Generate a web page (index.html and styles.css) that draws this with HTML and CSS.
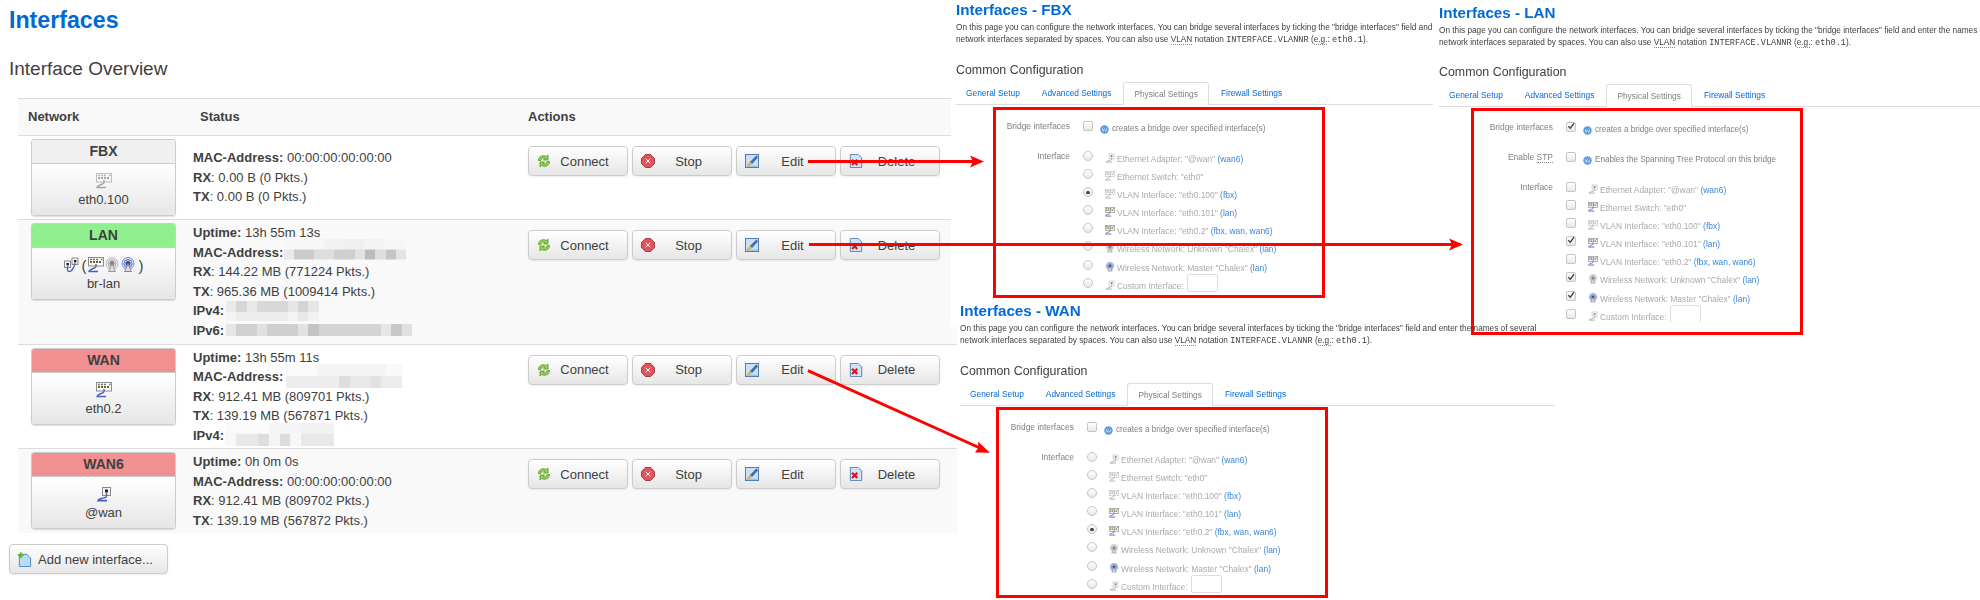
FILE: index.html
```html
<!DOCTYPE html>
<html lang="en">
<head>
<meta charset="utf-8">
<title>Interfaces</title>
<link rel="stylesheet" href="styles.css">
</head>
<body>
<svg class="defs" width="0" height="0" aria-hidden="true">
  <symbol id="i-eth" viewBox="0 0 16 16">
    <rect x="6.5" y="1.5" width="8" height="8" fill="#f6f6f6" stroke="#8a8a8a"/>
    <rect x="9" y="3.5" width="3" height="3" fill="#222"/>
    <path d="M10.5 7v3c0 2-2.500 1.500-5 2.500S2 13 2 14.500h9" fill="none" stroke="#4a62b8" stroke-width="1.400"/>
    <path d="M1 15.500h10" stroke="#9aa6d8"/>
  </symbol>
  <symbol id="i-bridge" viewBox="0 0 16 16">
    <rect x="1.500" y="4" width="6" height="6.500" fill="#f6f6f6" stroke="#8a8a8a"/>
    <rect x="9" y="1" width="6" height="6.500" fill="#f6f6f6" stroke="#8a8a8a"/>
    <rect x="3.500" y="6" width="2.400" height="2.400" fill="#222"/>
    <rect x="11" y="3" width="2.400" height="2.400" fill="#222"/>
    <path d="M4.500 9v4c0 2 3 2 4.500 0S12 8 12 6" fill="none" stroke="#4a62b8" stroke-width="1.300"/>
  </symbol>
  <symbol id="i-switch" viewBox="0 0 16 16">
    <rect x=".5" y=".5" width="15" height="8.500" fill="#f8f8f8" stroke="#8c8c8c"/>
    <path d="M2 2.500h2M5 2.500h2M8 2.500h2M13 2.500h1.500" stroke="#777" stroke-width="1.400"/>
    <path d="M2 5h2M5 5h2M8 5h2M11 5h2" stroke="#6d6a1c" stroke-width="2"/>
    <path d="M8 7v2.500c0 1.500-2 1.500-4 2.500S1 13 1 14.500h9" fill="none" stroke="#4a62b8" stroke-width="1.400"/>
  </symbol>
  <symbol id="i-wifi" viewBox="0 0 16 16">
    <circle cx="8" cy="6.500" r="6" fill="#eee" stroke="#bbb"/>
    <circle cx="8" cy="6.500" r="4" fill="#e2e2e2" stroke="#aaa"/>
    <circle cx="8" cy="6.500" r="2" fill="#888" stroke="#777"/>
    <path d="M8 7l-3.500 7.500h7z" fill="#ddd" stroke="#999"/>
  </symbol>
  <symbol id="i-wifiblue" viewBox="0 0 16 16">
    <circle cx="8" cy="6.500" r="6" fill="#dfe6fa" stroke="#7189dc"/>
    <circle cx="8" cy="6.500" r="4" fill="#c6d2f4" stroke="#5470cf"/>
    <circle cx="8" cy="6.500" r="2" fill="#556" stroke="#445"/>
    <path d="M8 7l-3.500 7.500h7z" fill="#ddd" stroke="#889"/>
  </symbol>
  <symbol id="i-connect" viewBox="2 1 12 14">
    <path d="M2.500 7.500C2.500 3.500 7 1.500 10.500 3.500L12 2v5H7.500l1.500-1.500C7 4.500 5 5.500 4.800 7.500z" fill="#9ad050" stroke="#4e9a1e" stroke-width=".8"/>
    <path d="M13.500 8.500c0 4-4.500 6-8 4L4 14V9h4.500L7 10.500c2 1 4 0 4.200-2z" fill="#9ad050" stroke="#4e9a1e" stroke-width=".8"/>
  </symbol>
  <symbol id="i-stop" viewBox="0 0 16 16">
    <path d="M5 .6h6L15.400 5v6L11 15.400H5L.6 11V5z" fill="#e0555c" stroke="#9c2f33"/>
    <path d="M5.500 5.500l5 5M10.500 5.500l-5 5" stroke="#fff" stroke-width="1.100"/>
  </symbol>
  <symbol id="i-edit" viewBox="0 0 16 16">
    <rect x=".5" y=".5" width="15" height="15" fill="#c9e0f7" stroke="#3d6fa8"/>
    <path d="M13 2L6 9l2 2 6.500-7z" fill="#3f6fb4" stroke="#2b4f86" stroke-width=".5"/>
    <path d="M6 9l-3.500 4.500L8 11z" fill="#f2c12e" stroke="#a8821a" stroke-width=".5"/>
    <path d="M2 14h12" stroke="#8fa9c8"/>
  </symbol>
  <symbol id="i-delete" viewBox="0 0 16 16">
    <path d="M1.500 .5h9l4 4v11h-13z" fill="#cfe2f7" stroke="#4a79b0"/>
    <path d="M3.500 6.500l6 6M9.500 6.500l-6 6" stroke="#d81414" stroke-width="2.400"/>
  </symbol>
  <symbol id="i-add" viewBox="0 0 16 16">
    <path d="M2.500 2.500h8l4 4v9h-12z" fill="#bcdcf6" stroke="#4a89c0"/>
    <path d="M4 .5v6M1 3.500h6" stroke="#5cb82e" stroke-width="2.200"/>
  </symbol>
  <symbol id="i-help" viewBox="0 0 16 16">
    <circle cx="8" cy="8" r="7.500" fill="#5a9ae0"/>
    <circle cx="8" cy="8" r="4.500" fill="#a9cdf2"/>
    <path d="M6 6.500c0-2.500 4-2.500 4 0 0 1.500-2 1.500-2 3M8 11v1.500" fill="none" stroke="#1d5fae" stroke-width="1.300"/>
  </symbol>
  <symbol id="i-check" viewBox="0 0 16 16">
    <path d="M2.500 8.500l4 4L14 2.500" fill="none" stroke="#444" stroke-width="2.600"/>
  </symbol>
</svg>

<main class="overview">
  <h1 class="page-title">Interfaces</h1>
  <h2 class="section-title">Interface Overview</h2>
  <table class="iface-table">
    <colgroup><col class="col-net"><col class="col-status"><col class="col-actions"></colgroup>
    <thead>
      <tr><th>Network</th><th>Status</th><th>Actions</th></tr>
    </thead>
    <tbody>
      <tr>
        <td class="td-net">
          <div class="card">
            <div class="card-head">FBX</div>
            <div class="card-body">
              <div class="card-icons"><svg class="ic16 dim"><use href="#i-switch"/></svg></div>
              <div>eth0.100</div>
            </div>
          </div>
        </td>
        <td class="td-status">
          <div><b>MAC-Address:</b> 00:00:00:00:00:00</div>
          <div><b>RX</b>: 0.00 B (0 Pkts.)</div>
          <div><b>TX</b>: 0.00 B (0 Pkts.)</div>
        </td>
        <td class="td-actions">
          <div class="actions">
            <button class="btn"><svg class="ic14"><use href="#i-connect"/></svg><span class="btn-label">Connect</span></button>
            <button class="btn"><svg class="ic14"><use href="#i-stop"/></svg><span class="btn-label">Stop</span></button>
            <button class="btn"><svg class="ic14"><use href="#i-edit"/></svg><span class="btn-label">Edit</span></button>
            <button class="btn"><svg class="ic14"><use href="#i-delete"/></svg><span class="btn-label">Delete</span></button>
          </div>
        </td>
      </tr>
      <tr class="alt">
        <td class="td-net">
          <div class="card">
            <div class="card-head head-green">LAN</div>
            <div class="card-body">
              <div class="card-icons"><svg class="ic16"><use href="#i-bridge"/></svg><span class="paren">(</span><svg class="ic16"><use href="#i-switch"/></svg><svg class="ic16"><use href="#i-wifi"/></svg><svg class="ic16"><use href="#i-wifiblue"/></svg><span class="paren">)</span></div>
              <div>br-lan</div>
            </div>
          </div>
        </td>
        <td class="td-status">
          <div><b>Uptime:</b> 13h 55m 13s</div>
          <div><b>MAC-Address:</b><span class="redact r-lan-mac"></span></div>
          <div><b>RX</b>: 144.22 MB (771224 Pkts.)</div>
          <div><b>TX</b>: 965.36 MB (1009414 Pkts.)</div>
          <div><b>IPv4:</b><span class="redact r-lan-ip4"></span></div>
          <div><b>IPv6:</b><span class="redact r-lan-ip6"></span></div>
        </td>
        <td class="td-actions">
          <div class="actions">
            <button class="btn"><svg class="ic14"><use href="#i-connect"/></svg><span class="btn-label">Connect</span></button>
            <button class="btn"><svg class="ic14"><use href="#i-stop"/></svg><span class="btn-label">Stop</span></button>
            <button class="btn"><svg class="ic14"><use href="#i-edit"/></svg><span class="btn-label">Edit</span></button>
            <button class="btn"><svg class="ic14"><use href="#i-delete"/></svg><span class="btn-label">Delete</span></button>
          </div>
        </td>
      </tr>
      <tr>
        <td class="td-net">
          <div class="card">
            <div class="card-head head-red">WAN</div>
            <div class="card-body">
              <div class="card-icons"><svg class="ic16"><use href="#i-switch"/></svg></div>
              <div>eth0.2</div>
            </div>
          </div>
        </td>
        <td class="td-status">
          <div><b>Uptime:</b> 13h 55m 11s</div>
          <div><b>MAC-Address:</b><span class="redact r-wan-mac"></span></div>
          <div><b>RX</b>: 912.41 MB (809701 Pkts.)</div>
          <div><b>TX</b>: 139.19 MB (567871 Pkts.)</div>
          <div><b>IPv4:</b><span class="redact r-wan-ip4"></span></div>
        </td>
        <td class="td-actions">
          <div class="actions">
            <button class="btn"><svg class="ic14"><use href="#i-connect"/></svg><span class="btn-label">Connect</span></button>
            <button class="btn"><svg class="ic14"><use href="#i-stop"/></svg><span class="btn-label">Stop</span></button>
            <button class="btn"><svg class="ic14"><use href="#i-edit"/></svg><span class="btn-label">Edit</span></button>
            <button class="btn"><svg class="ic14"><use href="#i-delete"/></svg><span class="btn-label">Delete</span></button>
          </div>
        </td>
      </tr>
      <tr class="alt">
        <td class="td-net">
          <div class="card">
            <div class="card-head head-red">WAN6</div>
            <div class="card-body">
              <div class="card-icons"><svg class="ic16"><use href="#i-eth"/></svg></div>
              <div>@wan</div>
            </div>
          </div>
        </td>
        <td class="td-status">
          <div><b>Uptime:</b> 0h 0m 0s</div>
          <div><b>MAC-Address:</b> 00:00:00:00:00:00</div>
          <div><b>RX</b>: 912.41 MB (809702 Pkts.)</div>
          <div><b>TX</b>: 139.19 MB (567872 Pkts.)</div>
        </td>
        <td class="td-actions">
          <div class="actions">
            <button class="btn"><svg class="ic14"><use href="#i-connect"/></svg><span class="btn-label">Connect</span></button>
            <button class="btn"><svg class="ic14"><use href="#i-stop"/></svg><span class="btn-label">Stop</span></button>
            <button class="btn"><svg class="ic14"><use href="#i-edit"/></svg><span class="btn-label">Edit</span></button>
            <button class="btn"><svg class="ic14"><use href="#i-delete"/></svg><span class="btn-label">Delete</span></button>
          </div>
        </td>
      </tr>
    </tbody>
  </table>
  <button class="btn btn-add"><svg class="ic15"><use href="#i-add"/></svg><span>Add new interface...</span></button>
</main>

<section class="win win-fbx">
  <div class="win-inner">
    <h2 class="win-title">Interfaces - FBX</h2>
    <p class="win-desc">On this page you can configure the network interfaces. You can bridge several interfaces by ticking the "bridge interfaces" field and enter the names of several<br>network interfaces separated by spaces. You can also use <abbr>VLAN</abbr> notation <code>INTERFACE.VLANNR</code> (<abbr>e.g.</abbr>: <code>eth0.1</code>).</p>
    <h3 class="win-sub">Common Configuration</h3>
    <ul class="tabs">
      <li class="tab">General Setup</li><li class="tab">Advanced Settings</li><li class="tab tab-on">Physical Settings</li><li class="tab">Firewall Settings</li>
    </ul>
    <div class="frow frow-single">
      <div class="flabel">Bridge interfaces</div>
      <span class="box"></span><svg class="help"><use href="#i-help"/></svg><span class="ftext">creates a bridge over specified interface(s)</span>
    </div>
    <div class="frow">
      <div class="flabel">Interface</div>
      <ul class="opts">
        <li class="opt"><span class="box round"></span><svg class="oic dim"><use href="#i-eth"/></svg><span class="ftext">Ethernet Adapter: "@wan" <a>(wan6)</a></span></li>
        <li class="opt"><span class="box round"></span><svg class="oic dim"><use href="#i-switch"/></svg><span class="ftext">Ethernet Switch: "eth0"</span></li>
        <li class="opt"><span class="box round on"></span><svg class="oic dim"><use href="#i-switch"/></svg><span class="ftext">VLAN Interface: "eth0.100" <a>(fbx)</a></span></li>
        <li class="opt"><span class="box round"></span><svg class="oic"><use href="#i-switch"/></svg><span class="ftext">VLAN Interface: "eth0.101" <a>(lan)</a></span></li>
        <li class="opt"><span class="box round"></span><svg class="oic"><use href="#i-switch"/></svg><span class="ftext">VLAN Interface: "eth0.2" <a>(fbx, wan, wan6)</a></span></li>
        <li class="opt"><span class="box round"></span><svg class="oic"><use href="#i-wifi"/></svg><span class="ftext">Wireless Network: Unknown "Chalex" <a>(lan)</a></span></li>
        <li class="opt"><span class="box round"></span><svg class="oic"><use href="#i-wifiblue"/></svg><span class="ftext">Wireless Network: Master "Chalex" <a>(lan)</a></span></li>
        <li class="opt"><span class="box round"></span><svg class="oic dim"><use href="#i-eth"/></svg><span class="ftext">Custom Interface:</span><span class="finput"></span></li>
      </ul>
    </div>
  </div>
</section>

<section class="win win-wan">
  <div class="win-inner">
    <h2 class="win-title">Interfaces - WAN</h2>
    <p class="win-desc">On this page you can configure the network interfaces. You can bridge several interfaces by ticking the "bridge interfaces" field and enter the names of several<br>network interfaces separated by spaces. You can also use <abbr>VLAN</abbr> notation <code>INTERFACE.VLANNR</code> (<abbr>e.g.</abbr>: <code>eth0.1</code>).</p>
    <h3 class="win-sub">Common Configuration</h3>
    <ul class="tabs">
      <li class="tab">General Setup</li><li class="tab">Advanced Settings</li><li class="tab tab-on">Physical Settings</li><li class="tab">Firewall Settings</li>
    </ul>
    <div class="frow frow-single">
      <div class="flabel">Bridge interfaces</div>
      <span class="box"></span><svg class="help"><use href="#i-help"/></svg><span class="ftext">creates a bridge over specified interface(s)</span>
    </div>
    <div class="frow">
      <div class="flabel">Interface</div>
      <ul class="opts">
        <li class="opt"><span class="box round"></span><svg class="oic dim"><use href="#i-eth"/></svg><span class="ftext">Ethernet Adapter: "@wan" <a>(wan6)</a></span></li>
        <li class="opt"><span class="box round"></span><svg class="oic dim"><use href="#i-switch"/></svg><span class="ftext">Ethernet Switch: "eth0"</span></li>
        <li class="opt"><span class="box round"></span><svg class="oic dim"><use href="#i-switch"/></svg><span class="ftext">VLAN Interface: "eth0.100" <a>(fbx)</a></span></li>
        <li class="opt"><span class="box round"></span><svg class="oic"><use href="#i-switch"/></svg><span class="ftext">VLAN Interface: "eth0.101" <a>(lan)</a></span></li>
        <li class="opt"><span class="box round on"></span><svg class="oic"><use href="#i-switch"/></svg><span class="ftext">VLAN Interface: "eth0.2" <a>(fbx, wan, wan6)</a></span></li>
        <li class="opt"><span class="box round"></span><svg class="oic"><use href="#i-wifi"/></svg><span class="ftext">Wireless Network: Unknown "Chalex" <a>(lan)</a></span></li>
        <li class="opt"><span class="box round"></span><svg class="oic"><use href="#i-wifiblue"/></svg><span class="ftext">Wireless Network: Master "Chalex" <a>(lan)</a></span></li>
        <li class="opt"><span class="box round"></span><svg class="oic dim"><use href="#i-eth"/></svg><span class="ftext">Custom Interface:</span><span class="finput"></span></li>
      </ul>
    </div>
  </div>
</section>

<section class="win win-lan">
  <div class="win-inner">
    <h2 class="win-title">Interfaces - LAN</h2>
    <p class="win-desc">On this page you can configure the network interfaces. You can bridge several interfaces by ticking the "bridge interfaces" field and enter the names of several<br>network interfaces separated by spaces. You can also use <abbr>VLAN</abbr> notation <code>INTERFACE.VLANNR</code> (<abbr>e.g.</abbr>: <code>eth0.1</code>).</p>
    <h3 class="win-sub">Common Configuration</h3>
    <ul class="tabs">
      <li class="tab">General Setup</li><li class="tab">Advanced Settings</li><li class="tab tab-on">Physical Settings</li><li class="tab">Firewall Settings</li>
    </ul>
    <div class="frow frow-single">
      <div class="flabel">Bridge interfaces</div>
      <span class="box on"><svg class="tick"><use href="#i-check"/></svg></span><svg class="help"><use href="#i-help"/></svg><span class="ftext">creates a bridge over specified interface(s)</span>
    </div>
    <div class="frow frow-single">
      <div class="flabel">Enable <abbr>STP</abbr></div>
      <span class="box"></span><svg class="help"><use href="#i-help"/></svg><span class="ftext">Enables the Spanning Tree Protocol on this bridge</span>
    </div>
    <div class="frow">
      <div class="flabel">Interface</div>
      <ul class="opts">
        <li class="opt"><span class="box"></span><svg class="oic dim"><use href="#i-eth"/></svg><span class="ftext">Ethernet Adapter: "@wan" <a>(wan6)</a></span></li>
        <li class="opt"><span class="box"></span><svg class="oic"><use href="#i-switch"/></svg><span class="ftext">Ethernet Switch: "eth0"</span></li>
        <li class="opt"><span class="box"></span><svg class="oic dim"><use href="#i-switch"/></svg><span class="ftext">VLAN Interface: "eth0.100" <a>(fbx)</a></span></li>
        <li class="opt"><span class="box"><svg class="tick"><use href="#i-check"/></svg></span><svg class="oic"><use href="#i-switch"/></svg><span class="ftext">VLAN Interface: "eth0.101" <a>(lan)</a></span></li>
        <li class="opt"><span class="box"></span><svg class="oic"><use href="#i-switch"/></svg><span class="ftext">VLAN Interface: "eth0.2" <a>(fbx, wan, wan6)</a></span></li>
        <li class="opt"><span class="box"><svg class="tick"><use href="#i-check"/></svg></span><svg class="oic"><use href="#i-wifi"/></svg><span class="ftext">Wireless Network: Unknown "Chalex" <a>(lan)</a></span></li>
        <li class="opt"><span class="box"><svg class="tick"><use href="#i-check"/></svg></span><svg class="oic"><use href="#i-wifiblue"/></svg><span class="ftext">Wireless Network: Master "Chalex" <a>(lan)</a></span></li>
        <li class="opt"><span class="box"></span><svg class="oic dim"><use href="#i-eth"/></svg><span class="ftext">Custom Interface:</span><span class="finput"></span></li>
      </ul>
    </div>
  </div>
</section>

<svg class="annotations" viewBox="0 0 1980 600" width="1980" height="600" aria-hidden="true">
  <g fill="none" stroke="#f00" stroke-width="3">
    <rect x="994.500" y="108.500" width="329" height="188"/>
    <rect x="997.500" y="408.500" width="329" height="188"/>
    <rect x="1472.500" y="109.500" width="329" height="224"/>
    <path d="M808 161.500H975M809 244.500H1452M808 370.700L980 448"/>
  </g>
  <g fill="#f00">
    <path d="M984 161.500L970 155.500l3 6-3 6z"/>
    <path d="M1463 244.500L1449 238.500l3 6-3 6z"/>
    <path d="M990 452.700L975 452.500l3.500-5-.5-6z"/>
  </g>
</svg>
</body>
</html>
```
FILE: styles.css
```css
* { box-sizing: border-box; }
html, body { margin: 0; padding: 0; }
body {
  position: relative;
  width: 1980px;
  height: 600px;
  overflow: hidden;
  background: #fff;
  color: #404040;
  font: 13px/19.5px "Liberation Sans", Arial, sans-serif;
}
.defs { position: absolute; }
ul { list-style: none; margin: 0; padding: 0; }

/* left: overview */
.overview { width: 957px; padding-left: 9px; }
.page-title { margin: 0; padding-top: 2px; font-size: 23.2px; line-height: 36px; font-weight: bold; color: #0069d6; }
.section-title { margin: 17px 0 16px; font-size: 19px; line-height: 27px; font-weight: normal; color: #404040; }
.iface-table {
  width: 939px;
  margin-left: 9px;
  table-layout: fixed;
  border-collapse: separate;
  border-spacing: 0;
}
.col-net { width: 172px; }
.col-status { width: 328px; }
.col-actions { width: 439px; }
.iface-table th {
  height: 37px;
  padding: 0 10px;
  text-align: left;
  font-weight: bold;
  background: #f9f9f9;
  border-top: 1px solid #ddd;
}
.iface-table td { border-top: 1px solid #ddd; vertical-align: top; }
.alt td { background: #f9f9f9; }
.td-net { padding: 3px 14px 3px 13px; }
.td-status { padding: 3px; }
.iface-table td.td-status { vertical-align: middle; }
.td-actions { padding: 10px; }
.actions { display: flex; gap: 4px; }

.card {
  height: 77px;
  border: 1px solid #ccc;
  border-radius: 3px;
  overflow: hidden;
  box-shadow: 0 1px 1px rgba(0, 0, 0, .12);
  text-align: center;
}
.card-head {
  height: 24px;
  background: #f0f0f0;
  border-bottom: 1px solid #ccc;
  font-size: 14px;
  line-height: 23px;
  font-weight: bold;
}
.head-green { background: #90f090; }
.head-red { background: #f09090; }
.card-body { height: 51px; padding-top: 9px; background: linear-gradient(#fff, #e6e6e6); line-height: 17px; }
.card-icons { display: flex; justify-content: center; align-items: center; height: 16px; margin-bottom: 2px; }
.paren { margin: 0 1px 0 3px; font-size: 15px; }
.ic16 { width: 16px; height: 16px; flex: none; }
.ic15 { width: 15px; height: 15px; flex: none; }
.ic14 { width: 14px; height: 14px; flex: none; margin-left: 8px; }
.dim { filter: grayscale(1) opacity(.55); }

.btn {
  display: flex;
  align-items: center;
  width: 100px;
  height: 30px;
  padding: 0;
  border: 1px solid #ccc;
  border-radius: 4px;
  background: linear-gradient(#fff, #e6e6e6);
  box-shadow: 0 1px 2px rgba(0, 0, 0, .08);
  color: #404040;
  font: 13px "Liberation Sans", Arial, sans-serif;
}
.btn-label { flex: 1; padding-right: 9px; text-align: center; }
.btn-add { width: 159px; margin-top: 11px; gap: 6px; padding-left: 7px; }

/* redacted values */
.redact { display: inline-block; vertical-align: top; }
.r-lan-mac {
  width: 122px; height: 21px; margin: -4px 0 -4px 1px;
  background:
    linear-gradient(90deg, #f7f7f7 0 40px, #f2f2f2 0 60px, #efefef 0 80px, #f3f3f3 0 100px, #f7f7f7 0) top / 100% 50% no-repeat,
    linear-gradient(90deg, #eaeaea 0 10px, #cbcbcb 0 30px, #dedede 0 50px, #cfcfcf 0 71px, #e2e2e2 0 81px, #bcbcbc 0 91px, #dedede 0 102px, #c6c6c6 0 112px, #e4e4e4 0) bottom / 100% 50% no-repeat;
}
.r-lan-ip4 {
  width: 93px; height: 20px; margin-left: 2px;
  background:
    linear-gradient(90deg, #eaeaea 0 10px, #d6d6d6 0 21px, #e8e8e8 0 31px, #d8d8d8 0 62px, #e6e6e6 0 72px, #d4d4d4 0 82px, #e6e6e6 0) top / 100% 55% no-repeat,
    linear-gradient(90deg, #f4f4f4 0 10px, #ececec 0 62px, #f3f3f3 0 72px, #e8e8e8 0 82px, #f2f2f2 0) bottom / 100% 45% no-repeat;
}
.r-lan-ip6 {
  width: 186px; height: 12px; margin: 3px 0 -5px 2px;
  background: linear-gradient(90deg, #e6e6e6 0 10px, #d0d0d0 0 31px, #e0e0e0 0 41px, #cfcfcf 0 72px, #e2e2e2 0 82px, #c4c4c4 0 93px, #d4d4d4 0 155px, #e6e6e6 0 165px, #c8c8c8 0 176px, #e0e0e0 0);
}
.r-wan-mac {
  width: 116px; height: 24px; margin: -3px 0 -6px 3px;
  background:
    linear-gradient(90deg, #fafafa 0 32px, #f4f4f4 0 100px, #f9f9f9 0) top / 100% 50% no-repeat,
    linear-gradient(90deg, #ededed 0 53px, #dedede 0 64px, #e9e9e9 0 84px, #e2e2e2 0 95px, #ececec 0) bottom / 100% 50% no-repeat;
}
.r-wan-ip4 {
  width: 109px; height: 24px; margin: -3px 0 -6px 1px;
  background:
    linear-gradient(90deg, #fafafa 0 44px, #f5f5f5 0 76px, #f2f2f2 0) top / 100% 45% no-repeat,
    linear-gradient(90deg, #f8f8f8 0 11px, #e8e8e8 0 33px, #dedede 0 44px, #f4f4f4 0 55px, #dcdcdc 0 65px, #f7f7f7 0 76px, #e8e8e8 0) bottom / 100% 55% no-repeat;
}

/* right: pasted screenshots of the edit pages */
.win {
  position: absolute;
  overflow: hidden;
  background: #fff;
  color: #404040;
}
.win-fbx { left: 951px; top: 0; width: 482px; height: 327px; }
.win-fbx .win-inner { padding: 0 0 0 5px; }
.win-wan { left: 957px; top: 300px; width: 1023px; height: 300px; }
.win-wan .win-inner { padding: 1px 0 0 3px; }
.win-lan { left: 1433px; top: 0; width: 547px; height: 322px; }
.win-lan .win-inner { padding: 3px 0 0 6px; }
.win-inner { width: 600px; filter: blur(.35px); }
.win-title { margin: 0; font-size: 15.2px; line-height: 20px; font-weight: bold; color: #0069d6; white-space: nowrap; }
.win-desc { margin: 2px 0 0; font-size: 8.25px; line-height: 12px; white-space: nowrap; }
.win-desc code { font-family: "Liberation Mono", monospace; font-size: 8.6px; }
abbr { border-bottom: 1px dotted #888; }
.win-sub { margin: 14px 0 2px; font-size: 12.4px; line-height: 20px; font-weight: normal; white-space: nowrap; }
.win-lan .win-sub { margin-top: 13px; }
.tabs { display: flex; width: 595px; height: 23px; border-bottom: 1px solid #ddd; font-size: 8.35px; line-height: 22px; }
.tab { padding: 0 10px; margin-right: 2px; color: #0069d6; white-space: nowrap; }
.tab-on { height: 23px; border: 1px solid #ddd; border-bottom: 0; border-radius: 3px 3px 0 0; background: #fff; color: #808080; }
.frow { display: flex; font-size: 8.45px; line-height: 18px; }
.frow-single { height: 30px; font-size: 8.15px; }
.tabs + .frow { margin-top: 12px; }
.win-lan .tabs + .frow { margin-top: 11px; }
.flabel { flex: none; width: 114px; margin-right: 13px; text-align: right; font-size: 8.45px; color: #808080; white-space: nowrap; }
.box {
  display: block;
  flex: none;
  position: relative;
  width: 10px;
  height: 10px;
  margin-top: 4px;
  border: 1px solid #c4c4c4;
  border-radius: 2px;
  background: linear-gradient(#fff, #e8e8e8);
}
.round { border-radius: 50%; }
.round.on::after {
  content: "";
  position: absolute;
  left: 30%; top: 30%;
  width: 40%; height: 40%;
  border-radius: 50%;
  background: #444;
}
.tick { position: absolute; left: 0; top: -10%; width: 100%; height: 100%; overflow: visible; }
.help { flex: none; width: 9px; height: 9px; margin: 8px 3px 0 7px; }
.ftext { padding-top: 3px; color: #808080; white-space: nowrap; }
.ftext a { color: #0069d6; }
.opts { flex: 1; }
.opt { display: flex; height: 18.1px; color: #aaa; }
.opt .ftext { color: #aaa; }
.opt .ftext a { color: #3c86da; }
.oic { flex: none; width: 10px; height: 10px; margin: 6px 2px 0 12px; }
.finput { flex: none; width: 31px; height: 18px; margin-left: 3px; border: 1px solid #ddd; border-radius: 2px; background: #fff; }

.annotations { position: absolute; left: 0; top: 0; pointer-events: none; }
```
